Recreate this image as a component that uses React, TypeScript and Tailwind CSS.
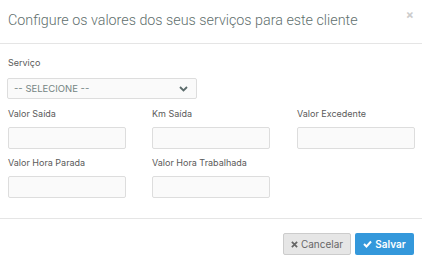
import React from 'react'

const font = { fontFamily: 'Inter, "Liberation Sans", sans-serif' }

function Field({ label }: { label: string }) {
  return (
    <div className="flex flex-col">
      <label className="h-[13px] text-[9px] leading-[13px] text-[#5a5a5a]">{label}</label>
      <input className="mt-[7px] h-[22px] w-[118px] rounded-[2px] border border-[#ddd] bg-[#fafafa]" />
    </div>
  )
}

export default function App() {
  return (
    <div className="h-[265px] w-[422px] bg-white" style={font}>
      <div className="flex h-[44px] items-start justify-between border-b border-[#e5e5e5] pl-[8px] pr-[8px]">
        <h4 className="mt-[10px] whitespace-nowrap font-['Roboto',sans-serif] text-[14.3px] font-light leading-[20px] text-[#5f706e]">
          Configure os valores dos seus serviços para este cliente
        </h4>
        <span className="mt-[6px] text-[12px] font-bold text-[#ccc]">×</span>
      </div>
      <div className="h-[174px] px-[7px] pt-[12px]">
        <label className="ml-[1px] block h-[13px] text-[9px] leading-[13px] text-[#5a5a5a]">Serviço</label>
        <div className="relative mt-[9px] h-[21px] w-[190px] rounded-[2px] border border-[#ddd] bg-[#fafafa]">
          <span className="absolute left-[6px] top-[3px] text-[9.5px] leading-[13px] text-[#748483]">
            -- SELECIONE --
          </span>
          <svg className="absolute right-[8px] top-[7px]" width="9" height="6" viewBox="0 0 9 6">
            <path d="M1 1 L4.5 4.5 L8 1" fill="none" stroke="#5b6b6b" strokeWidth="1.8" />
          </svg>
        </div>
        <div className="mt-[8px] grid grid-cols-[145px_145px_118px]">
          <div className="pl-[1px]"><Field label="Valor Saída" /></div>
          <Field label="Km Saída" />
          <Field label="Valor Excedente" />
        </div>
        <div className="mt-[7px] grid grid-cols-[145px_145px_118px]">
          <div className="pl-[1px]"><Field label="Valor Hora Parada" /></div>
          <Field label="Valor Hora Trabalhada" />
        </div>
      </div>
      <div className="flex justify-end gap-[4px] border-t border-[#e5e5e5] pr-[8px] pt-[14px]">
        <button className="flex h-[22px] w-[68px] items-center justify-center gap-[3px] rounded-[2px] border border-[#ccc] bg-[#e6e6e6] text-[10px] text-[#666]">
          <svg width="7" height="7" viewBox="0 0 8 8">
            <path d="M1 1 L7 7 M7 1 L1 7" stroke="#666" strokeWidth="2" />
          </svg>
          Cancelar
        </button>
        <button className="flex h-[22px] w-[59px] items-center justify-center gap-[3px] rounded-[2px] bg-[#3498db] text-[10px] font-semibold text-white">
          <svg width="9" height="8" viewBox="0 0 9 8">
            <path d="M1 4 L3.5 6.5 L8 1.5" fill="none" stroke="white" strokeWidth="2" />
          </svg>
          Salvar
        </button>
      </div>
    </div>
  )
}
